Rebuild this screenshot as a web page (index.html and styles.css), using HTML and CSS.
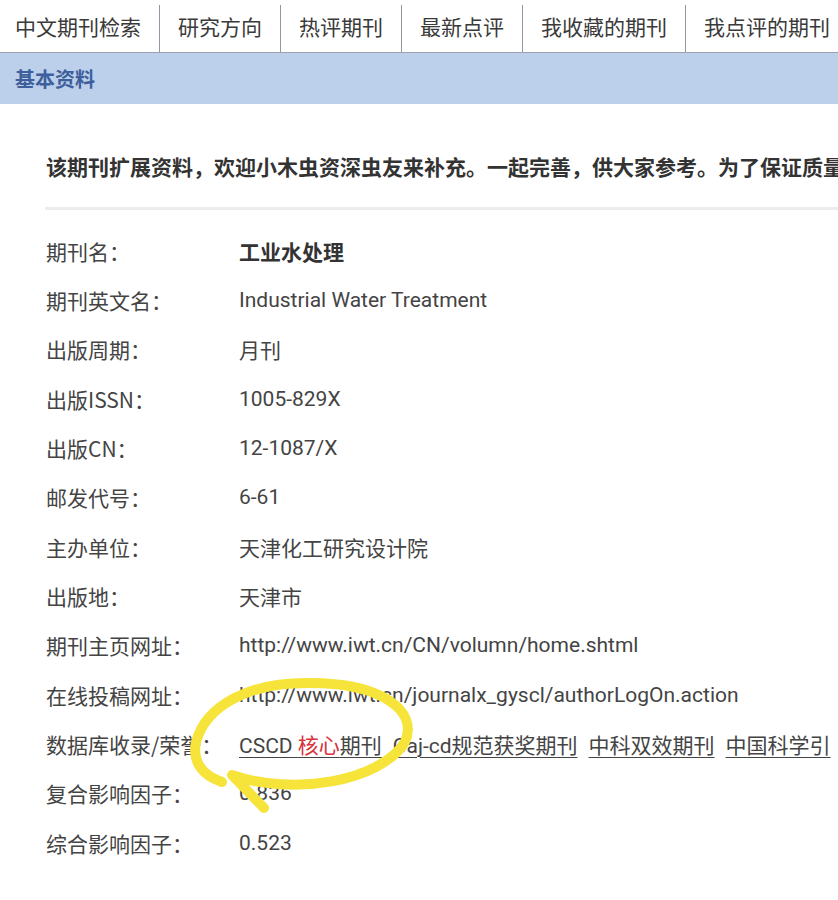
FILE: index.html
```html
<!DOCTYPE html>
<html lang="zh">
<head>
<meta charset="utf-8">
<title>基本资料</title>
<link rel="stylesheet" href="styles.css">
</head>
<body>
<nav class="tabs">
  <a class="tab first">中文期刊检索</a>
  <a class="tab">研究方向</a>
  <a class="tab">热评期刊</a>
  <a class="tab">最新点评</a>
  <a class="tab">我收藏的期刊</a>
  <a class="tab">我点评的期刊</a>
</nav>
<div class="bar">基本资料</div>
<main class="content">
  <p class="intro">该期刊扩展资料，欢迎小木虫资深虫友来补充。一起完善，供大家参考。为了保证质量</p>
  <hr class="rule">
  <div class="rows">
    <div class="row"><span class="label">期刊名：</span><span class="value strong">工业水处理</span></div>
    <div class="row"><span class="label">期刊英文名：</span><span class="value">Industrial Water Treatment</span></div>
    <div class="row"><span class="label">出版周期：</span><span class="value">月刊</span></div>
    <div class="row"><span class="label">出版ISSN：</span><span class="value">1005-829X</span></div>
    <div class="row"><span class="label">出版CN：</span><span class="value">12-1087/X</span></div>
    <div class="row"><span class="label">邮发代号：</span><span class="value">6-61</span></div>
    <div class="row"><span class="label">主办单位：</span><span class="value">天津化工研究设计院</span></div>
    <div class="row"><span class="label">出版地：</span><span class="value">天津市</span></div>
    <div class="row"><span class="label">期刊主页网址：</span><span class="value">http://www.iwt.cn/CN/volumn/home.shtml</span></div>
    <div class="row"><span class="label">在线投稿网址：</span><span class="value">http://www.iwt.cn/journalx_gyscl/authorLogOn.action</span></div>
    <div class="row"><span class="label">数据库收录/荣誉：</span><span class="value links"><a class="link">CSCD <span class="hot">核心</span>期刊</a><a class="link">Caj-cd规范获奖期刊</a><a class="link">中科双效期刊</a><a class="link">中国科学引</a></span></div>
    <div class="row"><span class="label">复合影响因子：</span><span class="value">0.836</span></div>
    <div class="row"><span class="label">综合影响因子：</span><span class="value">0.523</span></div>
  </div>
</main>
<svg class="scribble" width="838" height="900" viewBox="0 0 838 900" aria-hidden="true">
  <path d="M264 808 L232 775 C292 796 380 782 405 742 C419 710 380 683 310 683 C250 682 206 705 196 742 C192 762 202 775 222 782" fill="none" stroke="#f6e43a" stroke-width="10" stroke-linecap="round" stroke-linejoin="round"/>
</svg>
</body>
</html>
```
FILE: styles.css
```css
html, body {
  margin: 0;
  padding: 0;
  background: #fff;
}
body {
  width: 838px;
  height: 900px;
  overflow: hidden;
  position: relative;
  font-family: Roboto, "Noto Sans CJK SC", sans-serif;
  color: #444;
}
.tabs {
  display: flex;
  height: 52px;
  border-bottom: 1px solid #9aa3ae;
  white-space: nowrap;
}
.tab {
  display: flex;
  align-items: center;
  margin-top: 5px;
  padding: 0 18px 5px;
  border-right: 1px solid #8e98a3;
  font-family: "Noto Sans CJK SC", sans-serif;
  font-size: 21px;
  color: #3a3a3a;
  flex-shrink: 0;
}
.tab.first {
  padding-left: 15px;
  padding-right: 18px;
}
.bar {
  height: 51px;
  background: #bccfeb;
  display: flex;
  align-items: center;
  padding-left: 15px;
  font-family: "Noto Sans CJK SC", sans-serif;
  font-weight: 700;
  font-size: 20px;
  color: #3d5f9c;
}
.content {
  padding-left: 46px;
}
.intro {
  margin: 0;
  padding-top: 43px;
  height: 38px;
  line-height: 38px;
  font-family: "Noto Sans CJK SC", sans-serif;
  font-weight: 700;
  font-size: 21px;
  color: #333;
  white-space: nowrap;
  overflow: hidden;
}
.rule {
  margin: 22px 0 0 -1px;
  border: 0;
  height: 3px;
  background: #ececec;
}
.rows {
  margin-top: 16px;
}
.row {
  display: flex;
  align-items: center;
  height: 49.33px;
  font-size: 21px;
  white-space: nowrap;
}
.label {
  width: 193px;
  flex-shrink: 0;
  font-family: "Noto Sans CJK SC", sans-serif;
  font-size: 21px;
  color: #444;
}
.value {
  color: #444;
}
.value.strong {
  font-family: "Noto Sans CJK SC", sans-serif;
  font-weight: 700;
  color: #333;
}
.links {
  display: flex;
  gap: 11px;
  overflow: hidden;
}
.link {
  text-decoration: underline;
  text-decoration-thickness: 1px;
  text-underline-offset: 4px;
  color: #444;
}
.hot {
  color: #d8323a;
}
.scribble {
  position: absolute;
  left: 0;
  top: 0;
  pointer-events: none;
}
```
